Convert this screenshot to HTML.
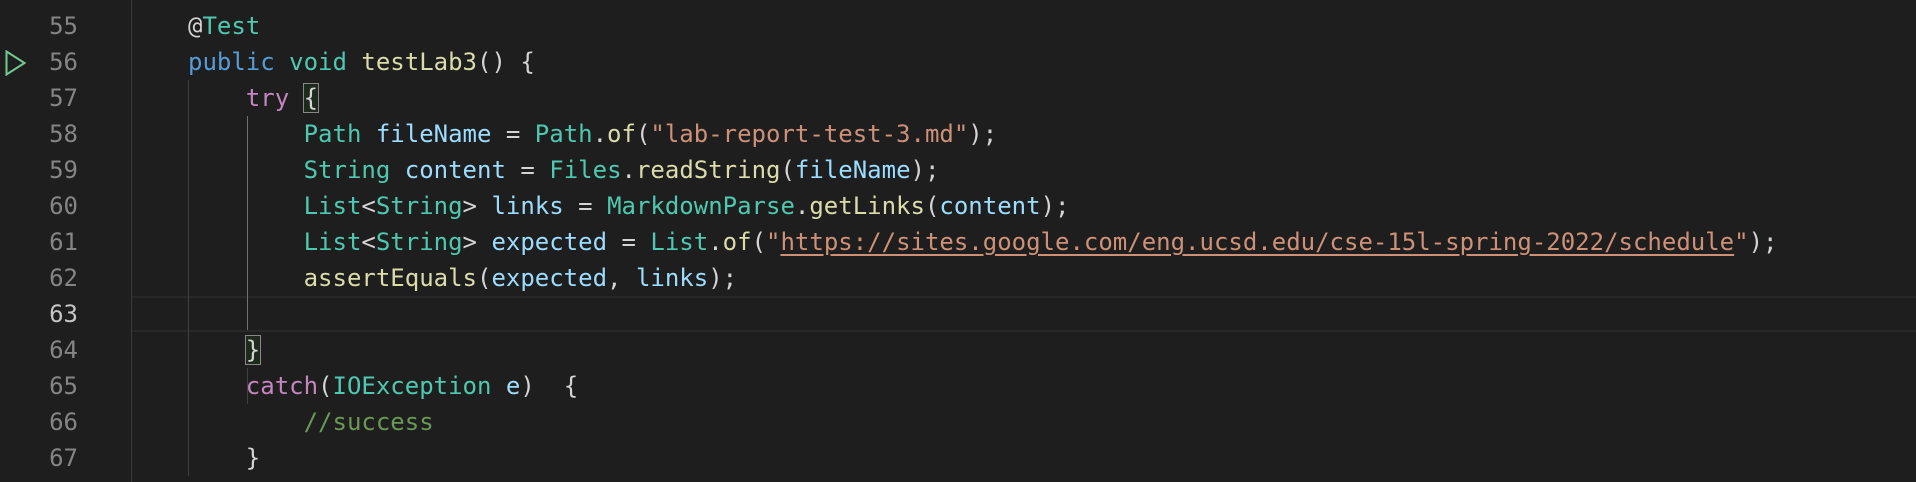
<!DOCTYPE html>
<html><head><meta charset="utf-8"><style>
body{margin:0;width:1916px;height:482px;background:#1e1e1e;overflow:hidden;position:relative;font-family:"DejaVu Sans Mono","Liberation Mono",monospace;font-size:24px;}
.ln{position:absolute;left:0;width:78px;text-align:right;color:#858585;height:36px;line-height:36px;}
.c{position:absolute;left:188px;height:36px;line-height:36px;white-space:pre;color:#d4d4d4;}
.k{color:#569cd6}.p{color:#c586c0}.t{color:#4ec9b0}.v{color:#9cdcfe}.f{color:#dcdcaa}.s{color:#ce9178}.u{color:#ce9178;text-decoration:underline;text-underline-offset:4px}.cm{color:#6a9955}
.g{position:absolute;width:1px;background:#404040}
.bx{outline:1px solid #888;background:#1f2a1f}
</style></head><body>
<div class="g" style="left:131px;top:0;height:482px;background:#3a3a3a"></div>
<div style="position:absolute;left:132px;right:0;top:296px;height:32px;border-top:2px solid #282828;border-bottom:2px solid #282828"></div>
<div class="g" style="left:188px;top:80px;height:396px;background:#404040"></div>
<div class="g" style="left:247px;top:116px;height:214px;background:#707070"></div>
<div class="g" style="left:247px;top:368px;height:36px;background:#404040"></div>
<svg style="position:absolute;left:5px;top:50px" width="22" height="26"><path d="M1.5 1.5 L19.5 13 L1.5 24.5 Z" fill="none" stroke="#73c991" stroke-width="2"/></svg>

<div class="ln" style="top:8px">55</div><div class="c" style="top:8px">@<span class="t">Test</span></div>
<div class="ln" style="top:44px">56</div><div class="c" style="top:44px"><span class="k">public</span> <span class="t">void</span> <span class="f">testLab3</span>() {</div>
<div class="ln" style="top:80px">57</div><div class="c" style="top:80px">    <span class="p">try</span> <span class="bx">{</span></div>
<div class="ln" style="top:116px">58</div><div class="c" style="top:116px">        <span class="t">Path</span> <span class="v">fileName</span> = <span class="t">Path</span>.<span class="f">of</span>(<span class="s">"lab-report-test-3.md"</span>);</div>
<div class="ln" style="top:152px">59</div><div class="c" style="top:152px">        <span class="t">String</span> <span class="v">content</span> = <span class="t">Files</span>.<span class="f">readString</span>(<span class="v">fileName</span>);</div>
<div class="ln" style="top:188px">60</div><div class="c" style="top:188px">        <span class="t">List</span>&lt;<span class="t">String</span>&gt; <span class="v">links</span> = <span class="t">MarkdownParse</span>.<span class="f">getLinks</span>(<span class="v">content</span>);</div>
<div class="ln" style="top:224px">61</div><div class="c" style="top:224px">        <span class="t">List</span>&lt;<span class="t">String</span>&gt; <span class="v">expected</span> = <span class="t">List</span>.<span class="f">of</span>(<span class="s">"</span><span class="u">https://sites.google.com/eng.ucsd.edu/cse-15l-spring-2022/schedule</span><span class="s">"</span>);</div>
<div class="ln" style="top:260px">62</div><div class="c" style="top:260px">        <span class="f">assertEquals</span>(<span class="v">expected</span>, <span class="v">links</span>);</div>
<div class="ln" style="top:296px;color:#c6c6c6">63</div>
<div class="ln" style="top:332px">64</div><div class="c" style="top:332px">    <span class="bx">}</span></div>
<div class="ln" style="top:368px">65</div><div class="c" style="top:368px">    <span class="p">catch</span>(<span class="t">IOException</span> <span class="v">e</span>)  {</div>
<div class="ln" style="top:404px">66</div><div class="c" style="top:404px">        <span class="cm">//success</span></div>
<div class="ln" style="top:440px">67</div><div class="c" style="top:440px">    }</div>
</body></html>
